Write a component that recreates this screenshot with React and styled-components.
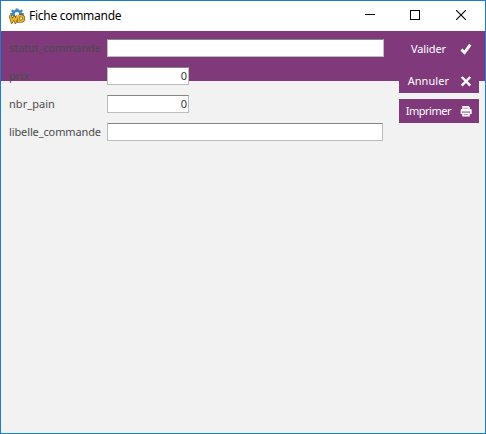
import React from "react";
import styled, { createGlobalStyle } from "styled-components";

const Global = createGlobalStyle`
  * { box-sizing: border-box; }
  body { margin: 0; overflow: hidden; }
`;

const Window = styled.div`
  width: 486px;
  height: 434px;
  display: flex;
  flex-direction: column;
  border: 1px solid #1a7fd4;
  background: #f2f2f2;
`;

const TitleBar = styled.header`
  height: 30px;
  flex: none;
  display: flex;
  align-items: center;
  padding-left: 8px;
  background: #fff;
`;

const Title = styled.h1`
  flex: 1;
  margin: 0 0 0 4px;
  font: 400 12px/30px "Noto Sans", sans-serif;
  letter-spacing: ${(p) => p.$tracking}px;
  color: #000;
  white-space: nowrap;
`;

const WindowControls = styled.div`
  display: flex;
  height: 30px;
`;

const ControlButton = styled.button`
  width: ${(p) => p.$width || 46}px;
  height: 30px;
  padding: 0 0 2px;
  border: 0;
  background: none;
  display: flex;
  align-items: center;
  justify-content: center;
`;

const Content = styled.main`
  flex: 1;
  display: flex;
  justify-content: space-between;
  padding: 6px 6px 0 8px;
  background: linear-gradient(#80397b, #80397b) 0 0 / 100% 50px no-repeat #f2f2f2;
`;

const Form = styled.form`
  display: flex;
  flex-direction: column;
  gap: 10px;
  padding-top: 2px;
`;

const Row = styled.div`
  display: flex;
  height: 18px;
`;

const Label = styled.label`
  width: 98px;
  font: 400 11px/18px "Noto Sans", sans-serif;
  letter-spacing: ${(p) => p.$tracking}px;
  color: #4b4b4b;
  white-space: nowrap;
`;

const Field = styled.input`
  width: ${(p) => p.$width}px;
  height: 18px;
  margin: 0;
  padding: 0 1px 2px;
  border: 1px solid #bdbdbd;
  border-top-color: #858585;
  border-radius: 0;
  outline: 0;
  background: #fff;
  color: #383848;
  font: 400 11px/14px "Noto Sans", sans-serif;
  text-align: ${(p) => (p.$numeric ? "right" : "left")};
`;

const Actions = styled.div`
  display: flex;
  flex-direction: column;
  width: 80px;
`;

const ActionButton = styled.button`
  display: flex;
  align-items: center;
  justify-content: flex-end;
  height: 24px;
  margin: 0 0 ${(p) => p.$after || 0}px;
  padding: 0 7px 0 0;
  border: 0;
  background: #80397b;
  color: #fff;
`;

const ActionText = styled.span`
  margin-right: ${(p) => p.$gap}px;
  font: 400 11px/24px "Noto Sans", sans-serif;
  letter-spacing: ${(p) => p.$tracking}px;
`;

const AppIcon = () => (
  <svg width="16" height="16" viewBox="0 0 16 16">
    <g fill="#4488bd">
      <circle cx="8" cy="6.2" r="4.8" />
      <path d="M6.6 .6h2.8v3H6.6zM2 2.9l1.6-1.6 2.4 2.5-1.8 1.7zM12.4 1.3L14 2.9l-2.4 2.6-1.8-1.7zM1.2 5h3v2.7h-3zM11.8 5h3v2.7h-3z" />
    </g>
    <circle cx="8" cy="6.3" r="2.3" fill="#fff" />
    <path d="M1.1 7.2l1.8 5.9 2.2-3.4 1.3 3.4 2-5.4M9.6 8v5.3h2q3-.2 3-2.9t-3-2.6h-2" fill="none" stroke="#6b5529" strokeWidth="3.1" />
    <path d="M1.1 7.2l1.8 5.9 2.2-3.4 1.3 3.4 2-5.4M9.6 8v5.3h2q3-.2 3-2.9t-3-2.6h-2" fill="none" stroke="#edb524" strokeWidth="1.8" />
  </svg>
);

const CheckIcon = () => (
  <svg width="12" height="12" viewBox="0 0 12 12" fill="none" stroke="#fff">
    <path d="M1.4 6.4L4.5 9.5 10.3 1.6" strokeWidth="2.8" />
  </svg>
);

const CrossIcon = () => (
  <svg width="12" height="12" viewBox="0 0 12 12" fill="none" stroke="#fff">
    <path d="M1.7 2l8.6 8.6M10.3 2L1.7 10.6" strokeWidth="2.4" />
  </svg>
);

const PrinterIcon = () => (
  <svg width="12" height="12" viewBox="0 0 12 12">
    <path d="M2.2 1h6.3l1.3 1.3V4H11l.7.8V9H10V7H2v2H.7V4.8L1.4 4h.8z" fill="#fff" />
    <path d="M2.2 7.5h7.6v4H2.2z" fill="#fff" />
    <path d="M3.2 3.2h5.3M3.8 9.5h4.4M2 6.7h8" stroke="#a878a5" strokeWidth=".8" />
  </svg>
);

const rows = [
  { name: "statut_commande", width: 277, tracking: -0.13 },
  { name: "prix", width: 82, value: "0", tracking: 0 },
  { name: "nbr_pain", width: 82, value: "0", tracking: 0.05 },
  { name: "libelle_commande", width: 276, tracking: -0.12 },
];

export default function App() {
  return (
    <>
      <Global />
      <Window>
        <TitleBar>
          <AppIcon />
          <Title $tracking={-0.28}>Fiche commande</Title>
          <WindowControls>
            <ControlButton aria-label="Réduire">
              <svg width="10" height="10" shapeRendering="crispEdges"><path d="M0 4.5h10" stroke="#000" /></svg>
            </ControlButton>
            <ControlButton $width={44} aria-label="Agrandir">
              <svg width="10" height="10" shapeRendering="crispEdges"><path d="M.5.5h9v9h-9z" fill="none" stroke="#000" /></svg>
            </ControlButton>
            <ControlButton $width={48} aria-label="Fermer">
              <svg width="10" height="10"><path d="M0 0l10 10M10 0L0 10" stroke="#000" strokeWidth="1.1" /></svg>
            </ControlButton>
          </WindowControls>
        </TitleBar>
        <Content>
          <Form>
            {rows.map((r) => (
              <Row key={r.name}>
                <Label htmlFor={r.name} $tracking={r.tracking}>{r.name}</Label>
                <Field id={r.name} $width={r.width} $numeric={r.value !== undefined} defaultValue={r.value} />
              </Row>
            ))}
          </Form>
          <Actions>
            <ActionButton $after={8}><ActionText $gap={14} $tracking={-0.1}>Valider</ActionText><CheckIcon /></ActionButton>
            <ActionButton $after={6}><ActionText $gap={11} $tracking={0.05}>Annuler</ActionText><CrossIcon /></ActionButton>
            <ActionButton><ActionText $gap={9} $tracking={-0.5}>Imprimer</ActionText><PrinterIcon /></ActionButton>
          </Actions>
        </Content>
      </Window>
    </>
  );
}
